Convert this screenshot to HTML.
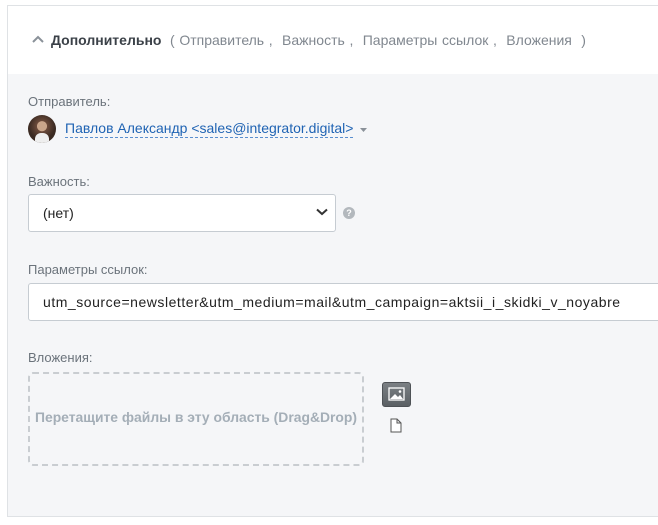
<!DOCTYPE html>
<html><head><meta charset="utf-8"><style>
*{box-sizing:border-box;margin:0;padding:0}
body{width:658px;height:525px;background:#fff;font-family:"Liberation Sans",Arial,sans-serif;position:relative;overflow:hidden}
.box{position:absolute;left:7px;top:5px;width:700px;height:512px;border:1px solid #dfe2e5;background:#f5f6f8}
.hdr{position:absolute;left:0;top:0;right:0;height:68px;background:#fff}
.a{position:absolute;white-space:nowrap}
.lbl{font-size:13px;color:#6b737b}
</style></head><body>
<div class="box"><div class="hdr"></div></div>
<svg class="a" style="left:32px;top:35px" width="12" height="8"><path d="M1 7 L6 2 L11 7" fill="none" stroke="#8a9199" stroke-width="2"/></svg>
<div class="a" style="left:51px;top:32px;font-size:14px;font-weight:bold;color:#3b4148">Дополнительно</div>
<div class="a" style="left:170px;top:32px;font-size:14px;color:#80878f;word-spacing:0.8px">( Отправитель ,&nbsp; Важность ,&nbsp; Параметры ссылок ,&nbsp; Вложения&nbsp; )</div>
<div class="a lbl" style="left:28px;top:94px">Отправитель:</div>
<div class="a" style="left:28px;top:115px;width:28px;height:28px;border-radius:50%;background:radial-gradient(circle at 50% 40%,#c9a58a 0 22%,#6b4a3a 24%,#3a2a22 60%);overflow:hidden"><div style="position:absolute;left:7px;top:18px;width:14px;height:12px;background:#eee;border-radius:6px 6px 0 0"></div></div>
<div class="a" style="left:65px;top:120px;font-size:14px;color:#1f63b3;border-bottom:1px dashed #5a8fd0;line-height:17px">Павлов Александр &lt;sales@integrator.digital&gt;</div>
<svg class="a" style="left:360px;top:128px" width="8" height="5"><path d="M0 0H7L3.5 4Z" fill="#8a9199"/></svg>
<div class="a lbl" style="left:28px;top:174px">Важность:</div>
<div class="a" style="left:28px;top:194px;width:308px;height:38px;background:#fff;border:1px solid #c6ccd2;border-radius:3px"></div>
<div class="a" style="left:43px;top:205px;font-size:14px;color:#222">(нет)</div>
<svg class="a" style="left:316px;top:208px" width="12" height="8"><path d="M1 1.5L6 6L11 1.5" fill="none" stroke="#333" stroke-width="2"/></svg>
<div class="a" style="left:343px;top:207px;width:12px;height:12px;border-radius:50%;background:#b3b8bd;color:#fff;font-size:9px;font-weight:bold;text-align:center;line-height:12px">?</div>
<div class="a lbl" style="left:28px;top:262px">Параметры ссылок:</div>
<div class="a" style="left:28px;top:283px;width:640px;height:38px;background:#fff;border:1px solid #c6ccd2;border-radius:3px"></div>
<div class="a" style="left:43px;top:294px;font-size:14px;letter-spacing:0.53px;color:#222">utm_source=newsletter&amp;utm_medium=mail&amp;utm_campaign=aktsii_i_skidki_v_noyabre</div>
<div class="a lbl" style="left:28px;top:350px">Вложения:</div>
<div class="a" style="left:28px;top:372px;width:336px;height:94px;border:2px dashed #c9cdd1;border-radius:5px"></div>
<div class="a" style="left:28px;top:409px;width:336px;text-align:center;font-size:13.9px;font-weight:bold;color:#a4aeb7">Перетащите файлы в эту область (Drag&amp;Drop)</div>
<div class="a" style="left:382px;top:382px;width:29px;height:25px;border-radius:3px;background:linear-gradient(#7b8084,#5b6064);border:1px solid #4e5256"></div>
<svg class="a" style="left:388px;top:387px" width="17" height="14"><rect x="1" y="1" width="15" height="12" fill="none" stroke="#fff" stroke-width="1.3"/><path d="M2 12L7 7L10 10L12 8L15 12Z" fill="#fff"/><circle cx="12" cy="4.5" r="1.3" fill="#fff"/></svg>
<svg class="a" style="left:390px;top:418px" width="12" height="15"><path d="M1 1H7L11 5V14H1Z M7 1V5H11" fill="#fff" stroke="#555" stroke-width="1"/></svg>
</body></html>
